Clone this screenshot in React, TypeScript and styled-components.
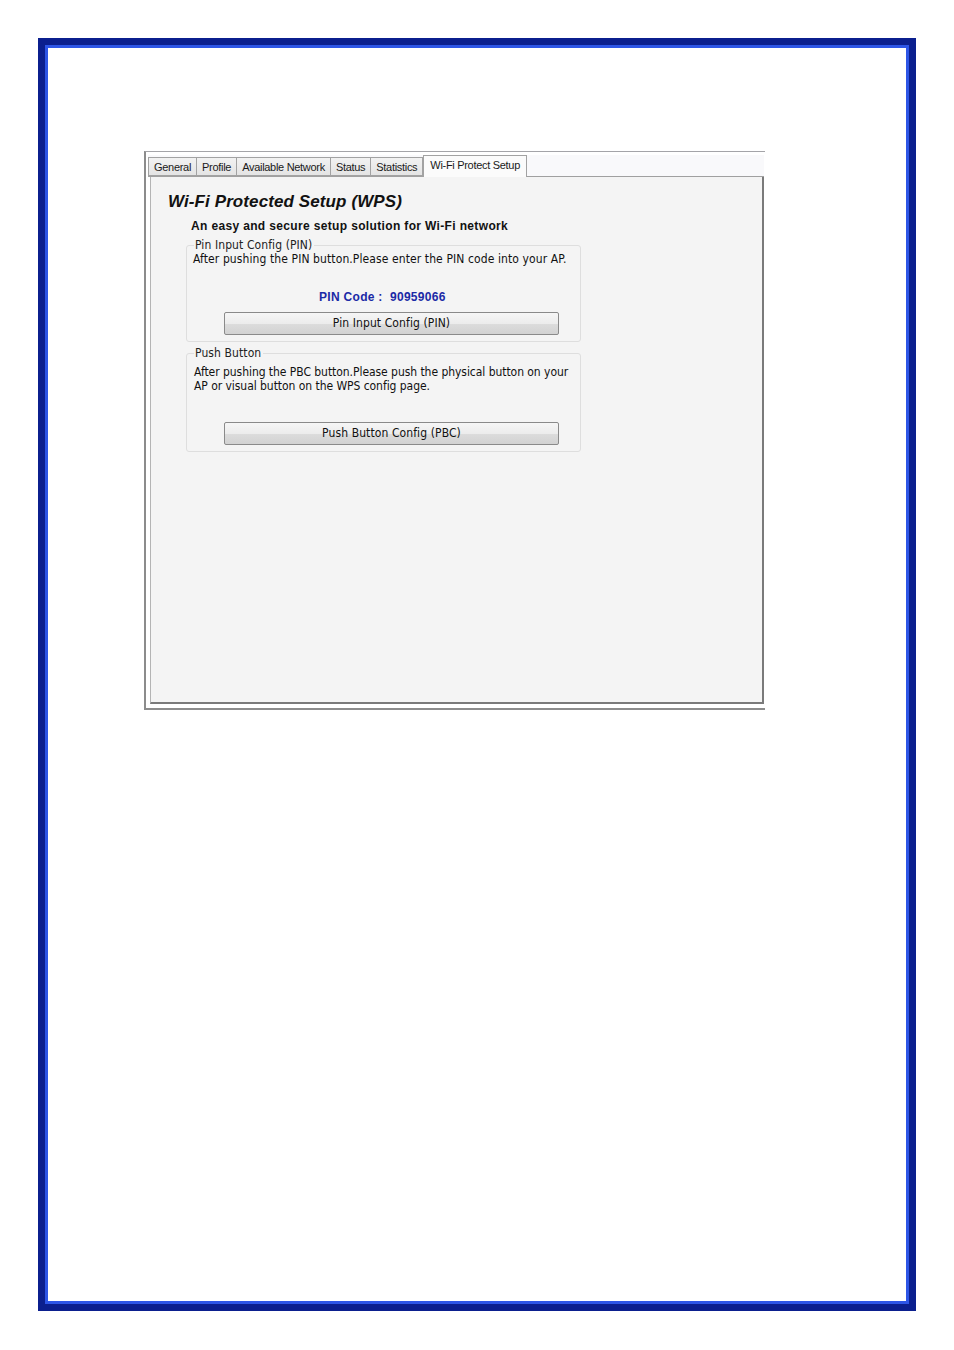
import React from 'react'
import styled, { createGlobalStyle } from 'styled-components'

const Global = createGlobalStyle`
  html, body { margin: 0; padding: 0; background: #ffffff; }
  body { width: 954px; height: 1350px; }
`

const Page = styled.div`
  width: 954px;
  height: 1350px;
  padding: 38px;
  box-sizing: border-box;
`

// blue double frame drawn around the page
const Frame = styled.div`
  width: 878px;
  height: 1273px;
  box-sizing: border-box;
  border: 7px solid #0b1f8e;
  box-shadow: inset 0 0 0 3px #2d55e6;
  padding: 106px 0 0 99px;
`

const Shot = styled.div`
  width: 621px;
  height: 559px;
  box-sizing: border-box;
  border-top: 1px solid #a4a4a8;
  border-left: 2px solid #8c8c8c;
  border-bottom: 2px solid #8c8c8c;
  padding: 3px 1px 4px 2px;
  display: flex;
  flex-direction: column;
  font-family: "Liberation Sans", Arial, sans-serif;
`

const TabStrip = styled.div`
  display: flex;
  align-items: flex-end;
  height: 21px;
  border-bottom: 1px solid #a0a0a0;
  background: #f9f9fb;
`

const Tab = styled.div<{ active?: boolean }>`
  height: ${p => (p.active ? 22 : 19)}px;
  line-height: ${p => (p.active ? 18 : 19)}px;
  padding: 0 ${p => (p.active ? 6 : 5)}px;
  margin-bottom: ${p => (p.active ? -1 : 0)}px;
  border: 1px solid #a2a2a2;
  border-bottom: ${p => (p.active ? 'none' : '1px solid #a2a2a2')};
  border-left-width: ${p => (p.active ? 1 : 0)}px;
  background: ${p => (p.active ? '#fbfbfb' : 'linear-gradient(#f2f2f2, #e4e4e4)')};
  font-size: 11px;
  letter-spacing: -0.3px;
  color: #1a1a1a;
  box-sizing: border-box;
  white-space: nowrap;
  &:first-child { border-left-width: 1px; }
`

const Panel = styled.div`
  flex: 1;
  margin-left: 2px;
  border-left: 1px solid #b4b4b4;
  border-right: 2px solid #7a7a7a;
  border-bottom: 2px solid #7a7a7a;
  background: #f4f4f4;
  padding: 15px 0 0 17px;
`

const Title = styled.div`
  font-size: 17px;
  font-weight: bold;
  font-style: italic;
  color: #111;
  letter-spacing: 0.1px;
`

const Subtitle = styled.div`
  margin: 7px 0 0 23px;
  font-size: 12px;
  font-weight: bold;
  color: #111;
  letter-spacing: 0.35px;
`

const Group = styled.fieldset<{ h: number; top: number }>`
  margin: ${p => p.top}px 0 0 18px;
  width: 395px;
  height: ${p => p.h}px;
  box-sizing: border-box;
  border: 1px solid #dedede;
  border-radius: 3px;
  padding: 0 0 0 6px;
  display: flex;
  flex-direction: column;
  font-family: "DejaVu Sans Condensed", "DejaVu Sans", sans-serif;
  font-size: 12px;
  letter-spacing: 0.1px;
  color: #111;
`

const Legend = styled.legend`
  padding: 0 2px 0 1px;
  margin-left: 1px;
  font-size: 12px;
  line-height: 13px;
  color: #222;
`

const Info = styled.div<{ top: number; tight?: boolean }>`
  margin-top: ${p => p.top}px;
  margin-left: ${p => (p.tight ? 1 : 0)}px;
  line-height: 14px;
  letter-spacing: ${p => (p.tight ? -0.05 : 0.1)}px;
`

const PinCode = styled.div`
  margin: 24px 0 0 126px;
  font-family: "Liberation Sans", Arial, sans-serif;
  font-weight: bold;
  font-size: 12px;
  color: #1b2aa6;
  letter-spacing: 0.3px;
`

const Button = styled.div<{ top: number }>`
  margin: ${p => p.top}px 0 0 31px;
  width: 335px;
  height: 23px;
  box-sizing: border-box;
  border: 1px solid #8a8a8a;
  border-radius: 2px;
  background: linear-gradient(#f6f6f6 0%, #ececec 50%, #dcdcdc 51%, #d2d2d2 100%);
  text-align: center;
  line-height: 21px;
  font-size: 12px;
  color: #111;
`

export default function App() {
  const tabs = ['General', 'Profile', 'Available Network', 'Status', 'Statistics']
  return (
    <Page>
      <Global />
      <Frame>
        <Shot>
          <TabStrip>
            {tabs.map(t => (
              <Tab key={t}>{t}</Tab>
            ))}
            <Tab active>Wi-Fi Protect Setup</Tab>
          </TabStrip>
          <Panel>
            <Title>Wi-Fi Protected Setup (WPS)</Title>
            <Subtitle>An easy and secure setup solution for Wi-Fi network</Subtitle>
            <Group h={103} top={6}>
              <Legend>Pin Input Config (PIN)</Legend>
              <Info top={0}>After pushing the PIN button.Please enter the PIN code into your AP.</Info>
              <PinCode>PIN Code :&nbsp; 90959066</PinCode>
              <Button top={8}>Pin Input Config (PIN)</Button>
            </Group>
            <Group h={105} top={5}>
              <Legend>Push Button</Legend>
              <Info top={5} tight>
                After pushing the PBC button.Please push the physical button on your
                <br />
                AP or visual button on the WPS config page.
              </Info>
              <Button top={29}>Push Button Config (PBC)</Button>
            </Group>
          </Panel>
        </Shot>
      </Frame>
    </Page>
  )
}
